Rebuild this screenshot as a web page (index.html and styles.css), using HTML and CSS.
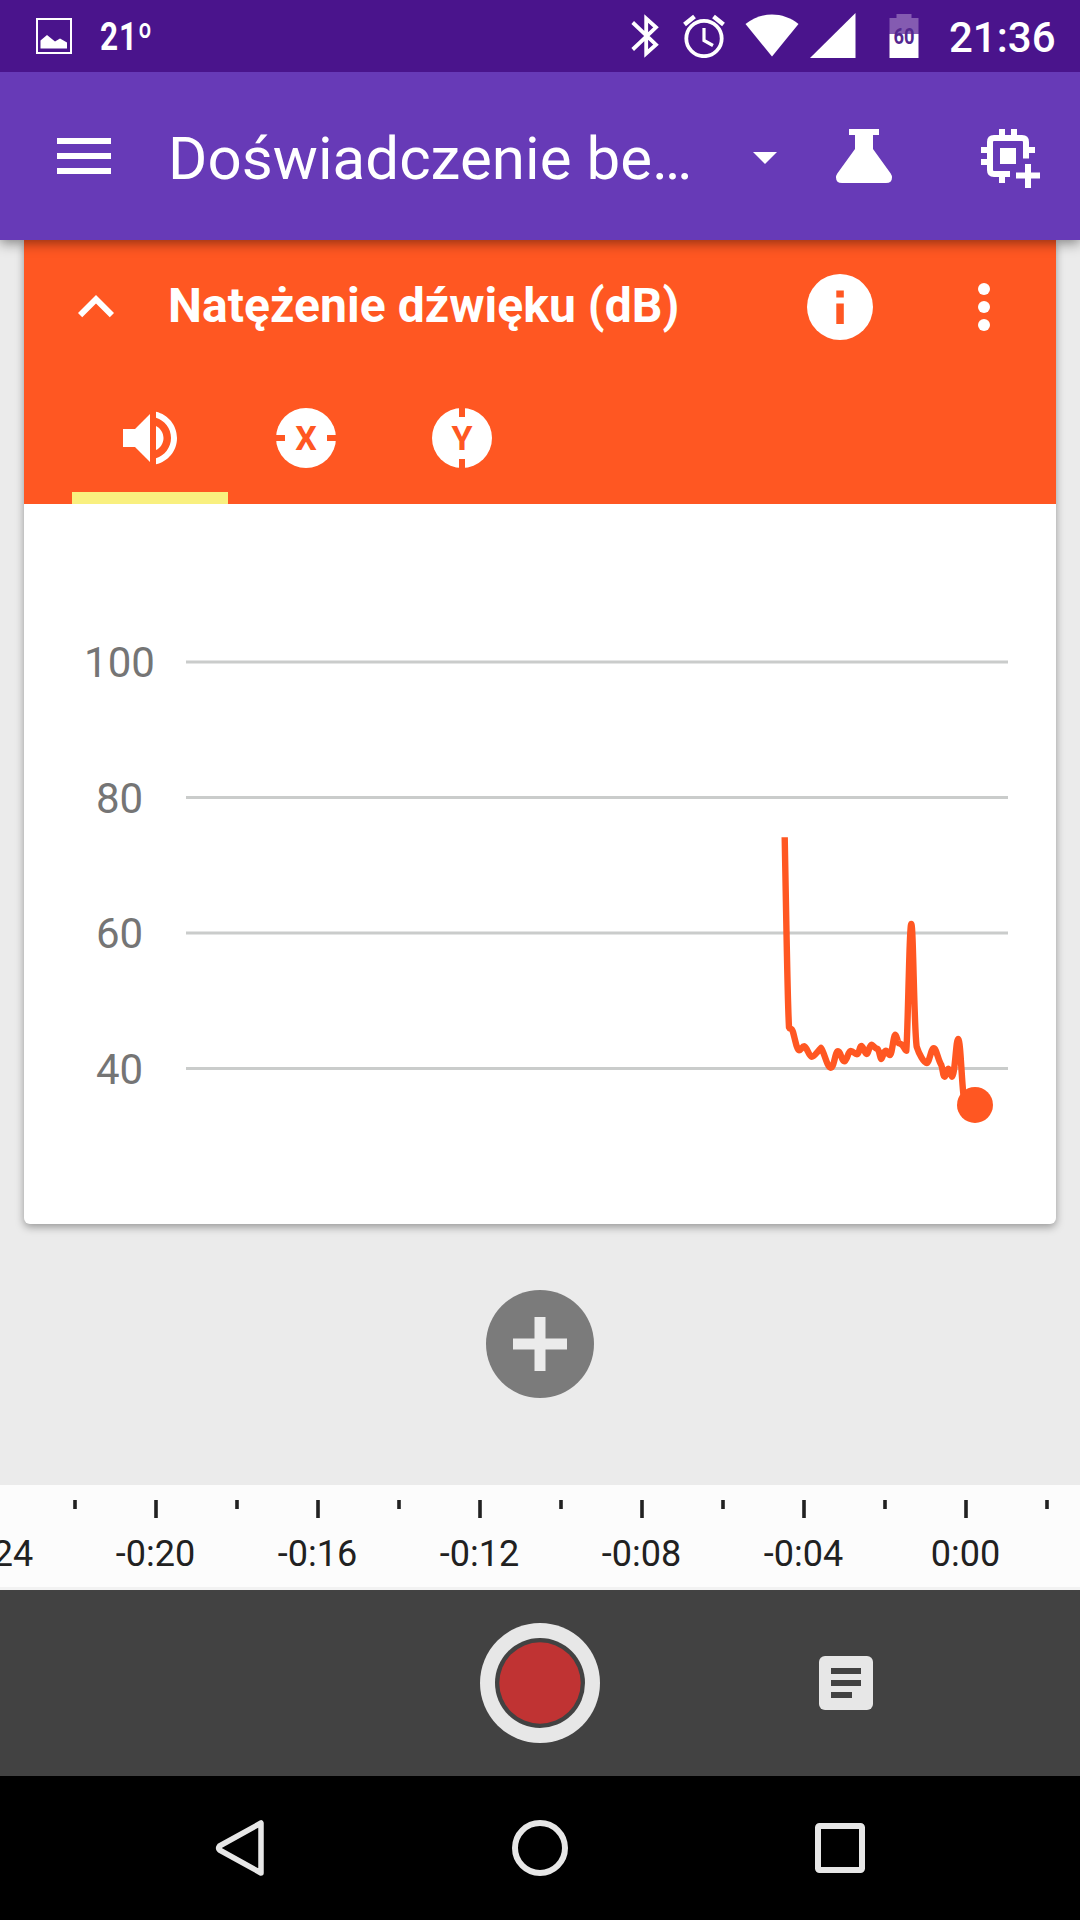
FILE: index.html
```html
<!DOCTYPE html>
<html lang="pl">
<head>
<meta charset="utf-8">
<title>Doświadczenie</title>
<link rel="stylesheet" href="styles.css">
</head>
<body>
<div class="screen">
  <header class="status">
    <svg class="status-image" width="36" height="36" viewBox="0 0 36 36"><rect x="1" y="1" width="34" height="34" fill="none" stroke="#fff" stroke-width="2"/><path fill="#fff" d="M4.500 30.500V22.500L11 17l8 6.500 5-3 7 4v6z"/></svg>
    <span class="temp">21º</span>
    <div class="status-right">
      <svg width="28" height="44" viewBox="0 0 28 44"><path fill="none" stroke="#fff" stroke-width="3.800" d="M1.700 8.500L25 30.700 15.200 39.500V4.500L25 13.300 1.700 35.500"/></svg>
      <svg class="alarm" width="42" height="44" viewBox="0 0 42 44"><g fill="none" stroke="#fff"><circle cx="21" cy="24.500" r="17.700" stroke-width="3.800"/><path stroke-width="3.200" d="M21 14v12.500l9 5"/><path stroke-width="4.500" d="M1.500 10.500L11.500 2.500M40.500 10.500L30.500 2.500"/></g></svg>
      <svg class="wifi" width="54" height="44" viewBox="0 0 54 44"><path fill="#fff" d="M.5 10C16-2.700 38-2.700 53.500 10L27 42.500z"/></svg>
      <svg class="signal" width="46" height="46" viewBox="0 0 46 46"><path fill="#fff" d="M45.500 0v45H0z"/></svg>
      <svg class="battery" width="30" height="44" viewBox="0 0 30 44"><path fill="#845bb1" d="M7.500 0h15v4H29.500V20H.5V4h7z"/><path fill="#fff" d="M.5 20h29v24H.5z"/><text x="15" y="30" textLength="21" lengthAdjust="spacingAndGlyphs">60</text></svg>
      <span class="clock">21:36</span>
    </div>
  </header>

  <div class="appbar">
    <svg class="menu" width="54" height="36" viewBox="0 0 54 36"><path fill="#fff" d="M0 0h54v6H0zM0 15h54v6H0zM0 30h54v6H0z"/></svg>
    <h1 class="title">Doświadczenie be…</h1>
    <svg class="drop" width="24" height="12" viewBox="0 0 24 12"><path fill="#fff" d="M0 0h24L12 12z"/></svg>
    <svg class="flask" width="56" height="54" viewBox="0 0 56 54"><path fill="#fff" d="M13 0h30v6h-6v14L54.700 44.500Q56 46.500 56 48.500Q56 54 50 54H6Q0 54 0 48.500Q0 46.500 1.300 44.500L19 20V6h-6z"/></svg>
    <svg class="chip" width="60" height="60" viewBox="0 0 60 60"><path fill="none" stroke="#fff" stroke-width="6" d="M29 45H13Q9 45 9 41V13Q9 9 13 9H41Q45 9 45 13V29.500"/><path fill="#fff" d="M18 0h6v7h-6zM30 0h6v7h-6zM0 18h7v6H0zM0 30h7v6H0zM47 18h7v6h-7zM18 47h6v7h-6zM19 19h16v16H19zM35 43.500h9V35h6v8.500h9v6h-9V59h-6v-9.500h-9z"/></svg>
  </div>

  <main class="content">
    <section class="card">
      <div class="card-head">
        <svg class="chevron" width="36" height="24" viewBox="6 7.700 12 8"><path fill="#fff" d="M12 8l-6 6 1.410 1.410L12 10.830l4.590 4.580L18 14z"/></svg>
        <h2 class="sensor">Natężenie dźwięku (dB)</h2>
        <svg class="info" width="66" height="66" viewBox="0 0 66 66"><circle cx="33" cy="33" r="33" fill="#fff"/><path fill="#ff5722" d="M29.300 16.500h7.500v7h-7.500zM29.300 29.500h7.500V50h-7.500z"/></svg>
        <svg class="more" width="12" height="48" viewBox="0 0 12 48"><g fill="#fff"><circle cx="6" cy="6" r="6"/><circle cx="6" cy="24" r="6"/><circle cx="6" cy="42" r="6"/></g></svg>
      </div>
      <nav class="tabs">
        <div class="tab active"><svg class="volume" width="72" height="72" viewBox="0 0 24 24"><path fill="#fff" d="M3 9v6h4l5 5V4L7 9H3zm13.500 3c0-1.770-1.020-3.290-2.500-4.030v8.050c1.480-.73 2.500-2.250 2.500-4.020zM14 3.230v2.060c2.890.86 5 3.540 5 6.710s-2.110 5.850-5 6.710v2.060c4.010-.91 7-4.490 7-8.770s-2.990-7.860-7-8.770z"/></svg></div>
        <div class="tab"><svg width="60" height="60" viewBox="0 0 60 60"><circle cx="30" cy="30" r="30" fill="#fff"/><path fill="#ff5722" d="M0 27h9v6H0zM51 27h9v6h-9z"/><text class="axis" x="30" y="42">X</text></svg></div>
        <div class="tab"><svg width="60" height="60" viewBox="0 0 60 60"><circle cx="30" cy="30" r="30" fill="#fff"/><path fill="#ff5722" d="M27 0h6v9h-6zM27 51h6v9h-6z"/><text class="axis" x="30" y="42">Y</text></svg></div>
      </nav>
      <svg class="chart" width="1032" height="720" viewBox="24 504 1032 720">
        <path stroke="#cacccb" stroke-width="3" d="M186 662H1008M186 797.500H1008M186 933H1008M186 1068.500H1008"/>
        <g class="ylabels"><text x="119.500" y="677">100</text><text x="119.500" y="813">80</text><text x="119.500" y="948">60</text><text x="119.500" y="1083.500">40</text></g>
        <path fill="none" stroke="#ff5722" stroke-width="6.400" stroke-linejoin="round" d="M784.700 837.300L786.500 933C787.300 970 787.800 1005 789 1027.300C790 1030 791.500 1027 793 1032C795 1039 797 1050.300 799 1050.300S802 1046.300 804.300 1046.300S809 1056.700 811.700 1056.700S817 1052 821 1048C824 1051 827 1067.700 830.700 1067.700S835 1051.300 838 1051.300S841.500 1061.300 844.300 1061.300S848 1051 850.700 1051S854.500 1054.300 857 1054.300S859.300 1046 861.300 1046S864.700 1054 866.700 1054S869 1044.700 871.700 1044.700C874 1046 875 1048.500 877.700 1049C880 1052 880 1059 881.300 1059S883.500 1050.700 885.700 1050.700S888 1055 890 1055C892 1055 893.500 1034.700 895.300 1034.700C897 1034.700 897.500 1044 899.300 1043.300C904 1044 904.500 1050.700 906.300 1050.700C908 1030 909.300 924 911.300 924S914 1030 916.700 1046.700C919 1054 924 1063 926.700 1063S931 1048.300 933.700 1048.300S938 1060 941.300 1065C943 1070 943 1076.700 944.700 1076.700S946.500 1068.700 948.300 1068.700S950.500 1076.700 952 1076.700C955 1076 956 1039 958 1039C960.500 1039 961.300 1075 963.300 1093.300Q966 1113 970 1118"/>
        <circle cx="975" cy="1104.900" r="18" fill="#ff5722"/>
      </svg>
    </section>
    <svg class="add" width="108" height="108" viewBox="0 0 108 108"><circle cx="54" cy="54" r="54" fill="#7b7b7b"/><path fill="#ebebeb" d="M48.500 27h11v21.500H81v11H59.500V81h-11V59.500H27v-11h21.500z"/></svg>
  </main>

  <div class="timeline">
    <svg class="ticks" width="1080" height="18" viewBox="0 0 1080 18"><path stroke="#212121" stroke-width="3.600" d="M156 0V18M318 0V18M480 0V18M642 0V18M804 0V18M966 0V18M75 0V9M237 0V9M399 0V9M561 0V9M723 0V9M885 0V9M1047 0V9"/></svg>
    <div class="times"><span>-0:24</span><span>-0:20</span><span>-0:16</span><span>-0:12</span><span>-0:08</span><span>-0:04</span><span>0:00</span></div>
  </div>

  <div class="controls">
    <svg class="record" width="120" height="120" viewBox="0 0 120 120"><circle cx="60" cy="60" r="60" fill="#e7e7e7"/><circle cx="60" cy="60" r="45" fill="#424242"/><circle cx="60" cy="60" r="40.700" fill="#c03333"/></svg>
    <svg class="notes" width="54" height="54" viewBox="0 0 54 54"><rect width="54" height="54" rx="6" fill="#e7e7e7"/><path fill="#424242" d="M12 12h30v6H12zM12 24h30v6H12zM12 36h21v6H12z"/></svg>
  </div>

  <footer class="navbar">
    <svg width="50" height="58" viewBox="0 0 50 58"><path fill="none" stroke="#e7e7e7" stroke-width="5.500" stroke-linejoin="round" d="M46 4v50L4.500 31Q2.800 29 4.500 27z"/></svg>
    <svg width="56" height="56" viewBox="0 0 56 56"><circle cx="28" cy="28" r="25" fill="none" stroke="#e7e7e7" stroke-width="6"/></svg>
    <svg width="50" height="50" viewBox="0 0 50 50"><rect x="3" y="3" width="44" height="44" rx="1.500" fill="none" stroke="#e7e7e7" stroke-width="6"/></svg>
  </footer>
</div>
</body>
</html>
```
FILE: styles.css
```css
* { box-sizing: border-box; }
body { margin: 0; font-family: Roboto, sans-serif; }
svg { display: block; flex: none; }
h1, h2 { margin: 0; white-space: nowrap; }

.screen { display: flex; flex-direction: column; width: 1080px; height: 1920px; overflow: hidden; background: #ebebeb; }

.status { position: relative; z-index: 2; display: flex; align-items: center; height: 72px; padding: 0 25px 0 36px; background: #4a148c; color: #fff; }
.temp { width: 52px; margin-left: 28px; padding-top: 2px; font-size: 38px; font-weight: 700; line-height: 44px; letter-spacing: 1px; transform: scaleX(.83); transform-origin: 0 50%; white-space: nowrap; }
.status-right { display: flex; align-items: center; margin-left: auto; }
.alarm { margin-left: 24px; }
.wifi { margin-left: 20px; }
.signal { margin-left: 11px; }
.battery { margin-left: 33px; }
.battery text { font-size: 22px; font-weight: 700; text-anchor: middle; fill: #54278f; }
.clock { width: 106px; margin-left: 30px; padding-top: 3px; font-size: 42px; font-weight: 500; line-height: 48px; white-space: nowrap; }

.appbar { position: relative; z-index: 1; display: flex; align-items: center; height: 168px; padding: 0 39px 0 57px; background: #673ab7; color: #fff; box-shadow: 0 3px 12px rgba(0, 0, 0, .45); }
.title { width: 530px; margin-left: 57px; padding-top: 5px; font-size: 60px; font-weight: 400; line-height: 72px; letter-spacing: .06px; }
.drop { margin-left: 56px; margin-top: 4px; }
.flask { margin-left: 59px; }
.chip { margin-left: 89px; margin-top: 6px; }

.content { display: flex; flex-direction: column; align-items: center; height: 1245px; }
.card { width: 1032px; height: 984px; overflow: hidden; background: #fff; border-radius: 0 0 6px 6px; box-shadow: 0 3px 8px rgba(0, 0, 0, .36); }
.card-head { display: flex; align-items: center; height: 134px; padding: 0 66px 0 54px; background: #ff5722; color: #fff; }
.chevron { margin-bottom: 2px; }
.sensor { width: 520px; margin-left: 54px; padding-bottom: 3px; font-size: 48px; font-weight: 700; line-height: 56px; letter-spacing: .05px; }
.info { margin-left: 119px; }
.more { margin-left: auto; }
.tabs { display: flex; height: 130px; padding-left: 48px; background: #ff5722; }
.tab { display: flex; justify-content: center; align-items: center; width: 156px; height: 130px; padding-bottom: 2px; }
.tab.active { border-bottom: 12px solid #f9f07f; }
.active .volume { margin-top: 12px; }
.axis { font-size: 34px; font-weight: 700; text-anchor: middle; fill: #ff5722; }
.ylabels { font-size: 42px; text-anchor: middle; fill: #757575; }
.add { margin-top: 66px; }

.timeline { height: 105px; padding-top: 15px; overflow: hidden; background: #fcfcfc; border-bottom: 3px solid #f2f2f2; }
.times { display: grid; grid-template-columns: repeat(7, 162px); width: 1134px; margin: 15px 0 0 -87.500px; font-size: 36px; line-height: 42px; text-align: center; color: #212121; }

.controls { display: grid; grid-template-columns: 480px 120px 1fr; align-items: center; height: 186px; background: #424242; }
.record { grid-column: 2; }
.notes { margin-left: 219px; }

.navbar { display: flex; align-items: center; justify-content: space-between; height: 144px; padding: 0 215px; background: #000; }
```
